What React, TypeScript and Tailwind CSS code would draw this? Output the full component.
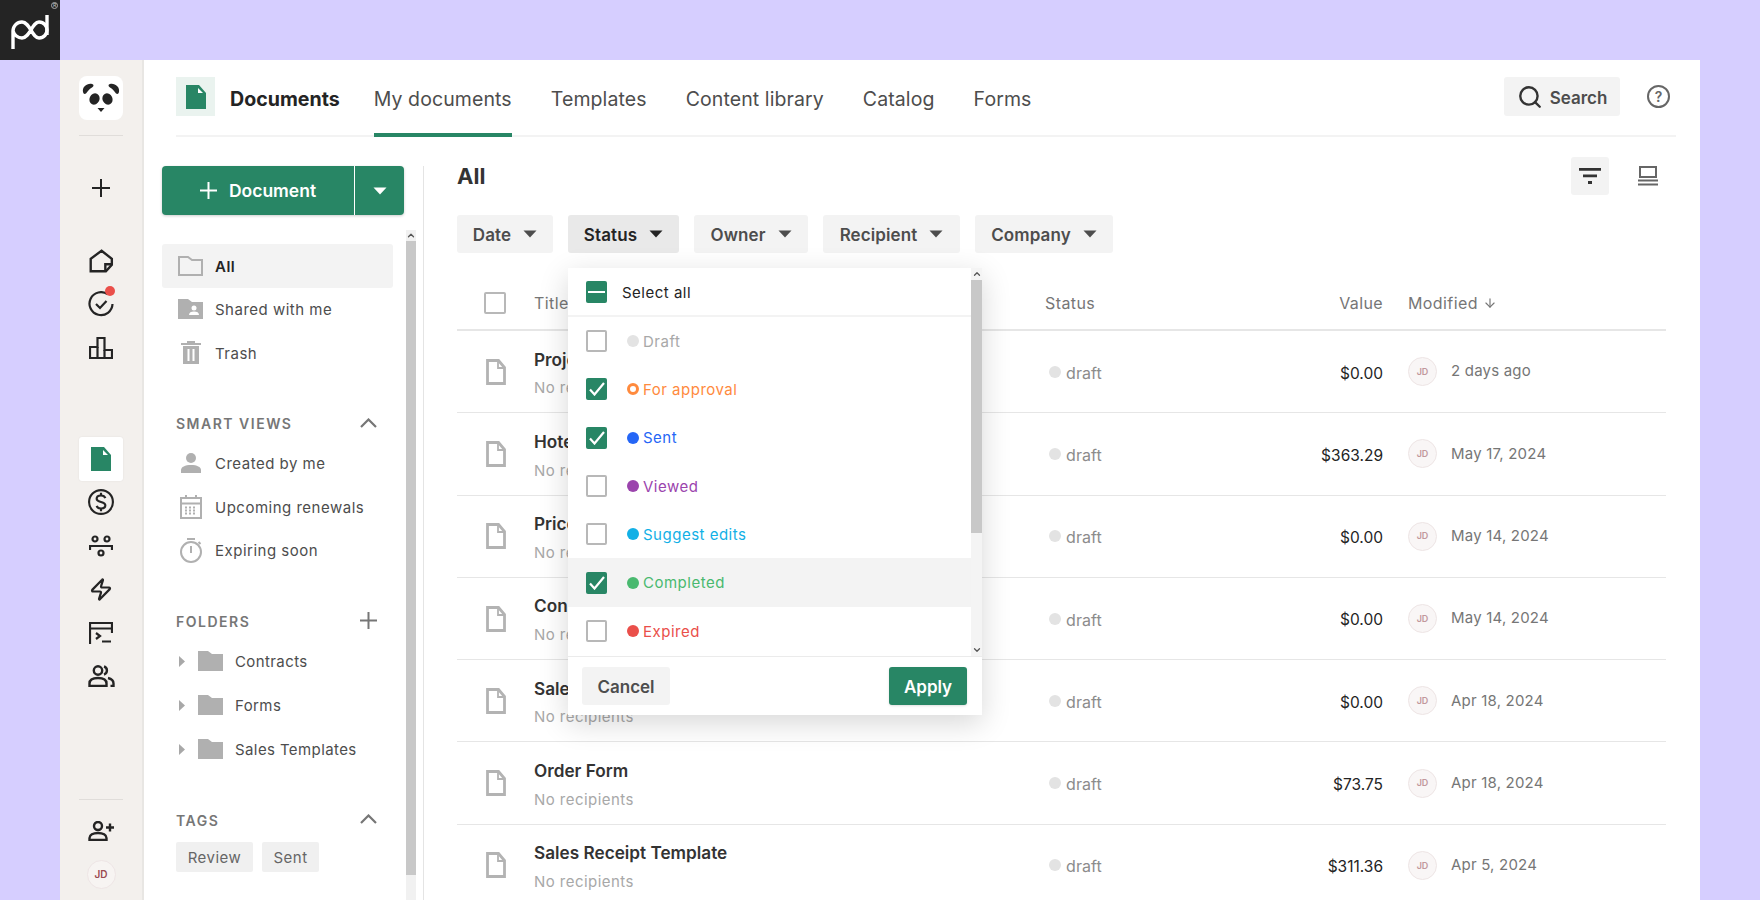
import { Zap, Search, ArrowDown, ChevronUp } from "lucide-react";

const rows = [
  { title: "Project Proposal", value: "$0.00", date: "2 days ago" },
  { title: "Hotel Booking Invoice", value: "$363.29", date: "May 17, 2024" },
  { title: "Price Quote", value: "$0.00", date: "May 14, 2024" },
  { title: "Consulting Agreement", value: "$0.00", date: "May 14, 2024" },
  { title: "Sales Proposal", value: "$0.00", date: "Apr 18, 2024" },
  { title: "Order Form", value: "$73.75", date: "Apr 18, 2024" },
  { title: "Sales Receipt Template", value: "$311.36", date: "Apr 5, 2024" },
];

const statuses = [
  { label: "Draft", text: "text-[#a8a8a8]", dot: "bg-[#e3e3e3]", checked: false },
  { label: "For approval", text: "text-[#ff8a3d]", dot: "border-[3px] border-[#ff8a3d]", checked: true },
  { label: "Sent", text: "text-[#2566f6]", dot: "bg-[#2566f6]", checked: true },
  { label: "Viewed", text: "text-[#9b44ad]", dot: "bg-[#9b44ad]", checked: false },
  { label: "Suggest edits", text: "text-[#12b0e6]", dot: "bg-[#12b0e6]", checked: false },
  { label: "Completed", text: "text-[#49b96f]", dot: "bg-[#49b96f]", checked: true, hover: true },
  { label: "Expired", text: "text-[#ea4f4a]", dot: "bg-[#ea4f4a]", checked: false },
];

function Caret({ className = "" }: { className?: string }) {
  return (
    <svg viewBox="0 0 14 8" className={`h-[8px] w-[14px] ${className}`} fill="currentColor">
      <path d="M0.500 0.500h13L7 7.500z" />
    </svg>
  );
}

function Chevron() {
  return (
    <svg viewBox="0 0 17 10" className="h-[10px] w-[17px]" fill="none" stroke="currentColor" strokeWidth="2.200">
      <path d="M1 9l7.500-7.500L16 9" />
    </svg>
  );
}

function PlusSmall() {
  return (
    <svg viewBox="0 0 17 17" className="h-[17px] w-[17px]" fill="none" stroke="currentColor" strokeWidth="2">
      <path d="M8.500 0v17M0 8.500h17" />
    </svg>
  );
}

function DocOutline() {
  return (
    <svg viewBox="0 0 20 26" className="h-[26px] w-[20px]" fill="none" stroke="#b3b3b3" strokeWidth="2.800">
      <path d="M1.500 1.500h11l6 7v16h-17z" />
      <path d="M12 2v7h6.500" strokeWidth="1.800" />
    </svg>
  );
}

function DocSolid({ className = "" }: { className?: string }) {
  return (
    <svg viewBox="0 0 20 24" className={className}>
      <path d="M0 0h13l7 8v16H0z" fill="#288665" />
      <path d="M12 3v5h5z" fill="#fff" />
    </svg>
  );
}

function FolderSolid() {
  return (
    <svg viewBox="0 0 25 20" className="h-[20px] w-[25px]" fill="#b0b0b0">
      <path d="M0 0h10l4 3h11v17H0z" />
    </svg>
  );
}

function Box({ on, dash }: { on?: boolean; dash?: boolean }) {
  if (dash) {
    return (
      <span className="flex h-[22px] w-[21px] items-center justify-center rounded-[2px] bg-[#288665]">
        <span className="h-[2px] w-[17px] bg-white" />
      </span>
    );
  }
  if (on) {
    return (
      <span className="flex h-[22px] w-[21px] items-center justify-center rounded-[2px] bg-[#288665]">
        <svg viewBox="0 0 16 14" className="h-[14px] w-[16px]" fill="none" stroke="#fff" strokeWidth="2.200">
          <path d="M1 7.500l4.500 5L15 1" />
        </svg>
      </span>
    );
  }
  return <span className="h-[22px] w-[21px] rounded-[2px] border-2 border-[#b8b8b8] bg-white" />;
}

function RailIcon({ children }: { children: React.ReactNode }) {
  return <div className="flex h-[43.5px] w-full items-center justify-center text-[#242424]">{children}</div>;
}

function Avatar({ small }: { small?: boolean }) {
  return (
    <span
      className={`flex shrink-0 items-center justify-center rounded-full border border-[#eee5e5] font-semibold ${
        small ? "h-[29px] w-[29px] bg-[#f9f6f6] text-[9px] text-[#c2989c]" : "h-[29px] w-[29px] bg-[#f7f4f2] text-[10px] text-[#9a4a50]"
      }`}
    >
      JD
    </span>
  );
}

function NavRow({ icon, label, active }: { icon: React.ReactNode; label: string; active?: boolean }) {
  return (
    <div className={`flex h-[43.5px] items-center rounded-[3px] ${active ? "bg-[#f3f3f3] font-semibold text-[#242424]" : "text-[#4d4d4d]"}`}>
      <span className="flex w-[53px] shrink-0 items-center justify-center pl-[4px]">{icon}</span>
      <span className="pt-[2px] text-[15px] tracking-[0.5px]">{label}</span>
    </div>
  );
}

function SectionHead({ label, action }: { label: string; action: React.ReactNode }) {
  return (
    <div className="flex h-[24px] items-center justify-between pl-[14px] pr-[16px] text-[#767676]">
      <span className="pt-[2px] text-[14px] font-semibold tracking-[1.5px]">{label}</span>
      {action}
    </div>
  );
}

function FolderRow({ label }: { label: string }) {
  return (
    <div className="flex h-[44px] items-center pl-[17px] text-[#4d4d4d]">
      <svg viewBox="0 0 6 11" className="h-[11px] w-[6px]" fill="#a8a8a8">
        <path d="M0 0l6 5.500L0 11z" />
      </svg>
      <span className="ml-[13px]">
        <FolderSolid />
      </span>
      <span className="ml-[12px] pt-[3px] text-[15px] tracking-[0.4px]">{label}</span>
    </div>
  );
}

function Pill({ label, active, w }: { label: string; active?: boolean; w: string }) {
  return (
    <div
      className={`flex h-[38px] items-center justify-center gap-[12px] rounded-[3px] text-[17px] font-semibold tracking-[0.1px] ${w} ${
        active ? "bg-[#e9e9e9] text-[#242424]" : "bg-[#f3f3f3] text-[#4d4d4d]"
      }`}
    >
      <span className="pt-[3px]">{label}</span>
      <Caret className={active ? "text-[#242424]" : "text-[#4d4d4d]"} />
    </div>
  );
}

function StatusMenu() {
  return (
    <div className="absolute left-0 top-[53px] z-20 flex h-[447px] w-[414px] flex-col bg-white font-normal shadow-[0_8px_28px_rgba(0,0,0,0.16)]">
      <div className="flex min-h-0 flex-1">
        <div className="flex-1">
          <div className="flex h-[49px] items-center border-b-2 border-[#f3f3f3] pl-[18px]">
            <Box dash />
            <span className="ml-[15px] pt-[4px] text-[15px] tracking-[0.5px] text-[#242424]">Select all</span>
          </div>
          {statuses.map((s) => (
            <div key={s.label} className={`flex h-[48.3px] items-center pl-[18px] ${s.hover ? "bg-[#f3f3f3]" : ""}`}>
              <Box on={s.checked} />
              <span className={`ml-[20px] h-[12px] w-[12px] rounded-full ${s.dot}`} />
              <span className={`ml-[4px] pt-[2px] text-[15px] tracking-[0.5px] ${s.text}`}>{s.label}</span>
            </div>
          ))}
        </div>
        <div className="flex w-[11px] flex-col items-center bg-[#f4f4f4]">
          <ChevronUp className="h-[12px] w-[10px] shrink-0 text-[#555]" strokeWidth={3} />
          <div className="h-[253px] w-full bg-[#c8c8c8]" />
          <div className="flex-1" />
          <ChevronUp className="h-[12px] w-[10px] shrink-0 rotate-180 text-[#555]" strokeWidth={3} />
        </div>
      </div>
      <div className="flex h-[59px] items-center justify-between border-t border-[#ebebeb] pl-[14px] pr-[15px]">
        <button className="h-[38px] w-[88px] rounded-[3px] bg-[#f3f3f3] pt-[3px] text-[17px] font-semibold text-[#4d4d4d]">Cancel</button>
        <button className="h-[38px] w-[78px] rounded-[3px] bg-[#288665] pt-[3px] text-[17px] font-semibold text-white shadow-sm">Apply</button>
      </div>
    </div>
  );
}

export default function App() {
  return (
    <div className="flex h-[900px] w-[1760px] flex-col overflow-hidden bg-[#d6ceff] font-['Inter',sans-serif]">
      <div className="h-[60px] shrink-0">
        <div className="relative flex h-[60px] w-[60px] items-center justify-center bg-[#242424]">
          <svg viewBox="0 0 38 35" className="mt-[4px] h-[35px] w-[38px]" fill="none" stroke="#fff" strokeWidth="3.400">
            <path d="M2 34V16c0-5 4-9 9-9 8 0 10 16 17 16 5 0 8-4 8-8s-3-8-8-8c-7 0-9 16-17 16-4 0-8-3-9-7" />
            <path d="M36 0v20" />
          </svg>
          <span className="absolute right-[2px] top-[2px] flex h-[7px] w-[7px] items-center justify-center rounded-full border border-[#aaa] text-[5px] leading-none text-[#ccc]">R</span>
        </div>
      </div>

      <div className="flex min-h-0 flex-1 pl-[60px] pr-[60px]">
        <div className="flex h-full w-full bg-white">
          {/* rail */}
          <aside className="flex w-[84px] shrink-0 flex-col items-center border-r-2 border-[#e8e6e3] bg-[#f3f0ed] pt-[16px]">
            <div className="flex h-[44px] w-[44px] items-center justify-center rounded-[8px] bg-white">
              <svg viewBox="0 0 38 32" className="h-[32px] w-[38px]" fill="#242424">
                <path d="M1 10C0 5 5 1 10 2c2 .5 2 2 0 3.500C7 7 6 9 4 11.500 2.500 12.500 1.500 12 1 10z" />
                <path d="M37 10c1-5-4-9-9-8-2 .5-2 2 0 3.500 3 1.500 4 3.500 6 6 1.500 1 2.500.5 3-1.500z" />
                <ellipse cx="12.500" cy="17" rx="5" ry="5.800" transform="rotate(25 12.500 17)" />
                <ellipse cx="25.500" cy="17" rx="5" ry="5.800" transform="rotate(-25 25.500 17)" />
                <path d="M15.500 26h7L19 30z" />
              </svg>
            </div>
            <div className="mt-[15px] h-px w-[44px] bg-[#e0ddda]" />
            <div className="mt-[30px] flex h-[44px] w-full items-center justify-center text-[#242424]">
              <svg viewBox="0 0 18 18" className="h-[18px] w-[18px]" fill="none" stroke="currentColor" strokeWidth="2">
                <path d="M9 0v18M0 9h18" />
              </svg>
            </div>
            <div className="mt-[29px] w-full">
              <RailIcon>
                <svg viewBox="0 0 24 24" className="h-[26px] w-[26px]" fill="none" stroke="currentColor" strokeWidth="2.200">
                  <path d="M12.500 2.500L22 10v5.500L16.500 21.500H2.500V10z" />
                  <path d="M22 15h-6v6.500" />
                </svg>
              </RailIcon>
              <RailIcon>
                <div className="relative">
                  <svg viewBox="0 0 26 26" className="h-[26px] w-[26px]" fill="none" stroke="currentColor" strokeWidth="2.200">
                    <path d="M20 3.500A11.500 11.500 0 1 0 24.500 13" />
                    <path d="M8 13l4 4 6.500-7" />
                  </svg>
                  <span className="absolute -right-[1px] -top-[5px] h-[10px] w-[10px] rounded-full bg-[#ea4f4a]" />
                </div>
              </RailIcon>
              <RailIcon>
                <svg viewBox="0 0 24 22" className="h-[22px] w-[24px]" fill="none" stroke="currentColor" strokeWidth="2.200">
                  <path d="M1 21V10h7.500V1h7v12H23v8z" />
                  <path d="M8.500 10v11M15.500 13v8" />
                </svg>
              </RailIcon>
            </div>
            <div className="mt-[67px] flex w-full flex-col items-center">
              <div className="flex h-[44px] w-[44px] items-center justify-center rounded-[3px] bg-white shadow-[0_0_2px_rgba(0,0,0,0.08)]">
                <DocSolid className="h-[24px] w-[20px]" />
              </div>
              <RailIcon>
                <svg viewBox="0 0 24 24" className="h-[26px] w-[26px]" fill="none" stroke="currentColor" strokeWidth="2">
                  <circle cx="12" cy="12" r="11" />
                  <path d="M16 8.500c-.5-1.500-2-2.500-4-2.500-2.500 0-4 1.300-4 3 0 4 8 2 8 6 0 1.700-1.500 3-4 3-2 0-3.500-1-4-2.500" />
                  <path d="M12 3.500V6M12 18v2.500" />
                </svg>
              </RailIcon>
              <RailIcon>
                <svg viewBox="0 0 24 22" className="h-[22px] w-[24px]" fill="none" stroke="currentColor" strokeWidth="2.200">
                  <circle cx="6" cy="4" r="2.500" />
                  <circle cx="18" cy="4" r="2.500" />
                  <circle cx="12" cy="18" r="2.500" />
                  <path d="M1 15v-4h22v4" />
                </svg>
              </RailIcon>
              <RailIcon>
                <Zap className="h-[27px] w-[24px]" strokeWidth={2.200} />
              </RailIcon>
              <RailIcon>
                <svg viewBox="0 0 24 22" className="h-[22px] w-[24px]" fill="none" stroke="currentColor" strokeWidth="2.200">
                  <path d="M1 22V1h22v5.500H1" />
                  <path d="M23 6.500V11" />
                  <path d="M7 11l4 3-4 3M13 19.500h9" />
                </svg>
              </RailIcon>
              <RailIcon>
                <svg viewBox="0 0 27 22" className="h-[22px] w-[27px]" fill="none" stroke="currentColor" strokeWidth="2.400">
                  <circle cx="10" cy="5.500" r="4.200" />
                  <path d="M1.500 21v-2.500C1.500 15 5 13 10 13s8.500 2 8.500 5.500V21z" />
                  <path d="M16 1.500a4.200 4.200 0 0 1 0 8M20 13c3.500.8 5.500 2.500 5.500 5.500V21h-3" />
                </svg>
              </RailIcon>
            </div>
            <div className="mt-auto h-px w-[44px] bg-[#e0ddda]" />
            <div className="mt-[9px] flex h-[44px] w-full items-center justify-center text-[#242424]">
              <svg viewBox="0 0 27 20" className="h-[20px] w-[27px]" fill="none" stroke="currentColor" strokeWidth="2.400">
                <circle cx="10" cy="5" r="4" />
                <path d="M1.500 19v-2c0-3 3.500-5 8.500-5s8.500 2 8.500 5v2z" />
                <path d="M18 6.500h8M22 2.500v8" />
              </svg>
            </div>
            <div className="mb-[11px] mt-[7px]">
              <Avatar />
            </div>
          </aside>

          {/* main */}
          <div className="flex min-w-0 flex-1 flex-col">
            <header className="mx-[32px] mr-[24px] flex h-[77px] shrink-0 items-stretch border-b-2 border-[#f3f3f3]">
              <div className="flex items-center pb-[2px]">
                <div className="flex h-[39px] w-[39px] items-center justify-center bg-[#eaf3ef]">
                  <DocSolid className="h-[24px] w-[20px]" />
                </div>
                <span className="ml-[15px] pt-[6px] text-[19.600px] font-bold text-[#242424]">Documents</span>
              </div>
              <nav className="ml-[34px] flex gap-[39px] text-[19.500px] tracking-[0.1px] text-[#4d4d4d]">
                <span className="relative flex items-center pt-[4px]">
                  My documents
                  <span className="absolute -bottom-[2px] left-0 right-0 h-[4px] bg-[#288665]" />
                </span>
                <span className="flex items-center pt-[4px]">Templates</span>
                <span className="flex items-center pt-[4px]">Content library</span>
                <span className="flex items-center pt-[4px]">Catalog</span>
                <span className="flex items-center pt-[4px]">Forms</span>
              </nav>
              <div className="ml-auto flex items-center pb-[2px]">
                <div className="flex h-[39px] w-[116px] items-center justify-center gap-[7px] rounded-[3px] bg-[#f3f3f3] text-[17px] font-semibold text-[#4d4d4d]">
                  <Search className="h-[26px] w-[26px] text-[#333]" strokeWidth={2.200} />
                  <span className="pt-[4px]">Search</span>
                </div>
                <div className="ml-[27px] mr-[6px] flex h-[23px] w-[23px] items-center justify-center rounded-full border-2 border-[#666] text-[14px] font-semibold text-[#666]">?</div>
              </div>
            </header>

            <div className="flex min-h-0 flex-1">
              {/* folders panel */}
              <div className="w-[280px] shrink-0 pt-[29px]">
                <div className="flex h-full flex-col border-r border-[#e4e4e4]">
                  <div className="ml-[18px] flex h-[49px] w-[242px] rounded-[4px] bg-[#288665] text-white shadow-[0_1px_3px_rgba(0,0,0,0.2)]">
                    <div className="flex flex-1 items-center justify-center gap-[12px] text-[17.500px] font-semibold">
                      <PlusSmall />
                      <span className="pt-[2px]">Document</span>
                    </div>
                    <div className="flex w-[50px] items-center justify-center border-l border-white">
                      <Caret />
                    </div>
                  </div>
                  <div className="mt-[15px] flex min-h-0 flex-1">
                    <div className="ml-[18px] w-[231px] pt-[14px]">
                      <NavRow
                        active
                        label="All"
                        icon={
                          <svg viewBox="0 0 25 20" className="h-[20px] w-[25px]" fill="none" stroke="#b0b0b0" strokeWidth="2">
                            <path d="M1 1h9l4 3h10v15H1z" />
                          </svg>
                        }
                      />
                      <NavRow
                        label="Shared with me"
                        icon={
                          <svg viewBox="0 0 25 20" className="h-[20px] w-[25px]" fill="#b0b0b0">
                            <path d="M0 0h10l4 3h11v17H0z" />
                            <circle cx="16" cy="9" r="2.500" fill="#fff" />
                            <path d="M11 16c0-2.500 2-3.500 5-3.500s5 1 5 3.500z" fill="#fff" />
                          </svg>
                        }
                      />
                      <NavRow
                        label="Trash"
                        icon={
                          <svg viewBox="0 0 20 23" className="h-[23px] w-[20px]" fill="#b0b0b0">
                            <path d="M0 2h6V0h8v2h6v2H0zM2 5h16v18H2z" />
                            <path d="M6.500 8h2v12h-2zM11.500 8h2v12h-2z" fill="#fff" />
                          </svg>
                        }
                      />

                      <div className="mt-[36px]">
                        <SectionHead label="SMART VIEWS" action={<Chevron />} />
                      </div>
                      <div className="mt-[7px]">
                        <NavRow
                          label="Created by me"
                          icon={
                            <svg viewBox="0 0 20 20" className="h-[20px] w-[20px]" fill="#b0b0b0">
                              <circle cx="10" cy="5" r="5" />
                              <path d="M0 20v-3c0-3 4-5 10-5s10 2 10 5v3z" />
                            </svg>
                          }
                        />
                        <NavRow
                          label="Upcoming renewals"
                          icon={
                            <svg viewBox="0 0 22 24" className="h-[24px] w-[22px]" fill="none" stroke="#b0b0b0" strokeWidth="2">
                              <path d="M1 3h20v20H1zM1 8.500h20M6 0v4M16 0v4" />
                              <path d="M5 12.500h12M5 15.500h12M5 18.500h12" strokeDasharray="2 2" />
                            </svg>
                          }
                        />
                        <NavRow
                          label="Expiring soon"
                          icon={
                            <svg viewBox="0 0 22 25" className="h-[25px] w-[22px]" fill="none" stroke="#b0b0b0" strokeWidth="2">
                              <circle cx="11" cy="14" r="10" />
                              <path d="M7 1h8M11 8v7M18.500 4l2 2" />
                            </svg>
                          }
                        />
                      </div>

                      <div className="mt-[36px]">
                        <SectionHead label="FOLDERS" action={<PlusSmall />} />
                      </div>
                      <div className="mt-[7px]">
                        <FolderRow label="Contracts" />
                        <FolderRow label="Forms" />
                        <FolderRow label="Sales Templates" />
                      </div>

                      <div className="mt-[36px]">
                        <SectionHead label="TAGS" action={<Chevron />} />
                      </div>
                      <div className="ml-[14px] mt-[11px] flex gap-[9px] text-[15px] tracking-[0.5px] text-[#666]">
                        <span className="flex h-[30px] w-[77px] items-center justify-center rounded-[2px] bg-[#f0f0f0] pt-[3px]">Review</span>
                        <span className="flex h-[30px] w-[57px] items-center justify-center rounded-[2px] bg-[#f0f0f0] pt-[3px]">Sent</span>
                      </div>
                    </div>
                    <div className="ml-[13px] flex w-[10px] flex-col items-center bg-[#f1f1f1]">
                      <ChevronUp className="h-[11px] w-[10px] shrink-0 text-[#555]" strokeWidth={3} />
                      <div className="h-[634px] w-full bg-[#c8c8c8]" />
                    </div>
                  </div>
                </div>
              </div>

              {/* list */}
              <div className="min-w-0 flex-1 pl-[33px] pr-[34px] pt-[20px]">
                <div className="flex h-[38px] items-center justify-between">
                  <h1 className="text-[22px] font-bold text-[#333]">All</h1>
                  <div className="flex items-center gap-[20px]">
                    <div className="flex h-[38px] w-[38px] items-center justify-center rounded-[3px] bg-[#f3f3f3]">
                      <svg viewBox="0 0 22 16" className="h-[16px] w-[22px]" fill="#333">
                        <path d="M0 0h22v2.800H0zM4 6.500h14v2.800H4zM9 13h4v3H9z" />
                      </svg>
                    </div>
                    <div className="mr-[-1px] flex h-[38px] w-[38px] items-center justify-center">
                      <svg viewBox="0 0 20 20" className="h-[20px] w-[20px]" fill="none" stroke="#666" strokeWidth="2">
                        <path d="M2 1h16v10H2zM0 14.500h20M0 18.500h20" />
                      </svg>
                    </div>
                  </div>
                </div>
                <div className="mt-[20px] flex gap-[15px]">
                  <Pill label="Date" w="w-[96px]" />
                  <div className="relative">
                    <Pill label="Status" active w="w-[111px]" />
                    <StatusMenu />
                  </div>
                  <Pill label="Owner" w="w-[114px]" />
                  <Pill label="Recipient" w="w-[137px]" />
                  <Pill label="Company" w="w-[138px]" />
                </div>

                <div className="mt-[21px] grid h-[57px] grid-cols-[77px_511px_160px_178px_1fr] items-center border-b-2 border-[#e6e6e6] pt-[3px] text-[16px] tracking-[0.4px] text-[#767676]">
                  <span className="pl-[27px]">
                    <span className="block h-[22px] w-[22px] rounded-[2px] border-2 border-[#b8b8b8]" />
                  </span>
                  <span>Title</span>
                  <span>Status</span>
                  <span className="text-right">Value</span>
                  <span className="flex items-center gap-[5px] pl-[25px]">
                    Modified
                    <ArrowDown className="h-[14px] w-[14px]" strokeWidth={2} />
                  </span>
                </div>

                {rows.map((r) => (
                  <div key={r.title} className="grid h-[82.300px] grid-cols-[77px_511px_160px_178px_1fr] items-center border-b border-[#e6e6e6]">
                    <span className="pl-[29px]">
                      <DocOutline />
                    </span>
                    <div className="pt-[3px]">
                      <div className="text-[17.200px] font-semibold text-[#333]">{r.title}</div>
                      <div className="mt-[5px] text-[15px] tracking-[0.45px] text-[#a8a8a8]">No recipients</div>
                    </div>
                    <div className="flex items-center gap-[5px] pl-[4px] text-[16px] tracking-[0.1px] text-[#8c8c8c]">
                      <span className="h-[12px] w-[12px] rounded-full bg-[#e3e3e3]" />
                      <span className="pt-[2px]">draft</span>
                    </div>
                    <div className="pt-[3px] text-right text-[15.500px] text-[#242424]">{r.value}</div>
                    <div className="flex items-center pl-[25px]">
                      <Avatar small />
                      <span className="ml-[14px] text-[15px] tracking-[0.2px] text-[#767676]">{r.date}</span>
                    </div>
                  </div>
                ))}
              </div>
            </div>
          </div>
        </div>
      </div>
    </div>
  );
}
